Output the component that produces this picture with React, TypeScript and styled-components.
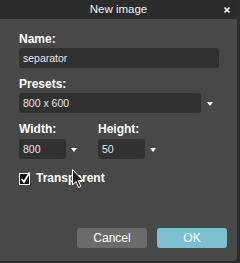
import React from "react";
import styled, { createGlobalStyle } from "styled-components";

const Global = createGlobalStyle`
  html, body { margin: 0; padding: 0; background: #2c2c2c; }
  body { width: 240px; height: 263px; overflow: hidden; }
`;

const Dialog = styled.div`
  position: relative;
  width: 237px;
  height: 261px;
  background: #484848;
  border-bottom-right-radius: 4px;
  display: flex;
  flex-direction: column;
  font-family: "Liberation Sans", Arial, sans-serif;
  overflow: hidden;
`;

const TitleBar = styled.div`
  height: 19px;
  background: #2b2b2b;
  display: flex;
  align-items: center;
  justify-content: center;
  position: relative;
  color: #f2f2f2;
  font-size: 11.5px;
  line-height: 19px;
`;

const Close = styled.svg`
  position: absolute;
  right: 7px;
  top: 7px;
`;

const Body = styled.div`
  flex: 1;
  display: flex;
  flex-direction: column;
  padding: 13px 10px 13px 19px;
`;

const Field = styled.div<{ $mt?: number }>`
  display: flex;
  flex-direction: column;
  margin-top: ${(p) => p.$mt ?? 0}px;
`;

const Label = styled.div<{ $gap?: number }>`
  color: #fff;
  font-weight: bold;
  font-size: 12px;
  line-height: 14px;
  margin-bottom: ${(p) => p.$gap ?? 2}px;
`;

const Box = styled.div<{ $w: number }>`
  width: ${(p) => p.$w}px;
  height: 20px;
  box-sizing: border-box;
  background: #313131;
  border-radius: 3px;
  color: #e6e6e6;
  font-size: 10.5px;
  line-height: 20px;
  padding-left: 4px;
`;

const SelectRow = styled.div`
  display: flex;
  align-items: center;
`;

const Arrow = styled.span<{ $ml: number }>`
  width: 0;
  height: 0;
  margin-left: ${(p) => p.$ml}px;
  margin-top: 1px;
  border-left: 3.5px solid transparent;
  border-right: 3.5px solid transparent;
  border-top: 4px solid #fff;
`;

const Row = styled.div`
  display: flex;
  gap: 21px;
  margin-top: 9px;
`;

const CheckRow = styled.div`
  display: flex;
  align-items: center;
  gap: 5px;
  margin-top: 12px;
  color: #fff;
  font-weight: bold;
  font-size: 12px;
  line-height: 14px;
`;

const Buttons = styled.div`
  margin-top: auto;
  display: flex;
  justify-content: flex-end;
  gap: 10px;
`;

const Button = styled.div<{ $primary?: boolean }>`
  width: 70px;
  height: 20px;
  border-radius: 3px;
  background: ${(p) => (p.$primary ? "#7bbfd1" : "#6b6b6b")};
  color: #fff;
  font-size: 12px;
  line-height: 20px;
  text-align: center;
`;

const Cursor = styled.svg`
  position: absolute;
  left: 72px;
  top: 169px;
`;

export default function App() {
  return (
    <>
      <Global />
      <Dialog>
        <TitleBar>
          New image
          <Close width="6" height="6" viewBox="0 0 6 6">
            <path d="M0.5 0.5 L5.5 5.5 M5.5 0.5 L0.5 5.5" stroke="#eee" strokeWidth="1.6" />
          </Close>
        </TitleBar>
        <Body>
          <Field>
            <Label>Name:</Label>
            <Box $w={200}>separator</Box>
          </Field>
          <Field $mt={9}>
            <Label>Presets:</Label>
            <SelectRow>
              <Box $w={182}>800 x 600</Box>
              <Arrow $ml={6} />
            </SelectRow>
          </Field>
          <Row>
            <Field>
              <Label $gap={3}>Width:</Label>
              <SelectRow>
                <Box $w={47}>800</Box>
                <Arrow $ml={5} />
              </SelectRow>
            </Field>
            <Field>
              <Label $gap={3}>Height:</Label>
              <SelectRow>
                <Box $w={47}>50</Box>
                <Arrow $ml={5} />
              </SelectRow>
            </Field>
          </Row>
          <CheckRow>
            <svg width="12" height="13" viewBox="0 0 12 13">
              <rect x="0.5" y="1.5" width="10" height="11" fill="#111" stroke="#fff" strokeWidth="1" />
              <path d="M2.5 7 L5 10 L10.5 0.5" fill="none" stroke="#fff" strokeWidth="1.8" />
            </svg>
            Transparent
          </CheckRow>
          <Buttons>
            <Button>Cancel</Button>
            <Button $primary>OK</Button>
          </Buttons>
        </Body>
        <Cursor width="12" height="20" viewBox="0 0 12 20">
          <path d="M0.5 0.5 L0.5 16 L4 12.5 L6.5 18.5 L8.8 17.5 L6.3 11.6 L11 11.6 Z" fill="#222" stroke="#fff" strokeWidth="1" />
        </Cursor>
      </Dialog>
    </>
  );
}
